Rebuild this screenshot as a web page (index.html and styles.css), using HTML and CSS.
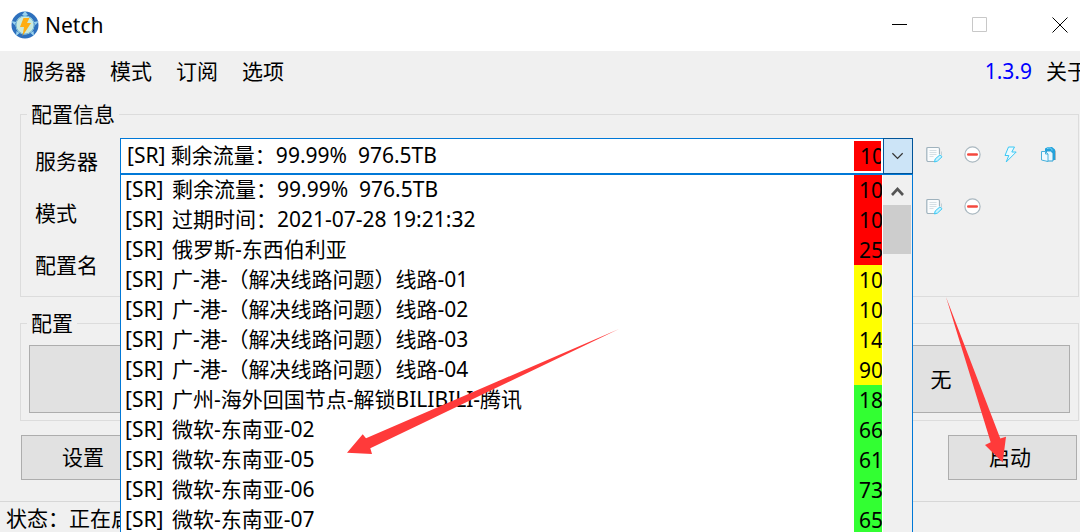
FILE: index.html
```html
<!DOCTYPE html>
<html lang="zh-CN">
<head>
<meta charset="utf-8">
<title>Netch</title>
<link rel="stylesheet" href="styles.css">
</head>
<body>
<svg class="sprites" aria-hidden="true">
  <symbol id="edit" viewBox="0 0 17 17">
    <path d="M13 1.500V10L8.500 15.500H2.300A1.500 1.500 0 0 1 .8 14V2.500a1 1 0 0 1 1-1z" fill="#fafcfd"/>
    <path d="M13.500 8V3a1.500 1.500 0 0 0-1.500-1.500H1.800a1 1 0 0 0-1 1V14a1.500 1.500 0 0 0 1.500 1.500H8" fill="none" stroke="#9fb2bd" stroke-width="1.200"/>
    <path d="M15.500 5.500v4" stroke="#c4d0d6" fill="none"/>
    <path d="M3.500 4.500h7M3.500 6.500h7M3.500 8.500h7M3.500 10.500h4" stroke="#d5dfe4"/>
    <path d="M8.500 16l.7-3L14 8.800l2 2L11.500 15z" fill="#c9f3ff" stroke="#35c8f5"/>
  </symbol>
  <symbol id="remove" viewBox="0 0 17 17">
    <circle cx="8.500" cy="8.500" r="7.600" fill="#fff" stroke="#aab8c0" stroke-width="1.200"/>
    <path d="M4.200 8.500h8.600" stroke="#f4493f" stroke-width="2.400" stroke-linecap="round"/>
  </symbol>
  <symbol id="bolt" viewBox="0 0 17 17">
    <path d="M6.500 1h6L9.800 6h4.400L4.200 16l2.600-6.500H3z" fill="#eafaff" stroke="#3bc8f5" stroke-linejoin="round"/>
  </symbol>
  <symbol id="copy" viewBox="0 0 17 17">
    <path d="M5 5V2.500L8 1h4l3 2.500V14h-4z" fill="#22a3dd"/>
    <path d="M7 2.500c3-1.500 5 0 5 2" fill="none" stroke="#8fdcf8"/>
    <path d="M15.500 4.500V14" stroke="#aeb6ba"/>
    <path d="M6.500 5h4l2.500 2v8H6.500z" fill="#eaf8fe" stroke="#2c9fd2"/>
    <path d="M1.500 5.500h4L8 8v7.500L1.500 14z" fill="#f0faff" stroke="#48b1dc"/>
    <path d="M5.500 5.500V8H8" fill="none" stroke="#48b1dc"/>
  </symbol>
</svg>

<header class="titlebar">
  <svg class="logo" viewBox="0 0 28 28" aria-hidden="true">
    <circle cx="14" cy="14" r="11.500" fill="#c9eadf" stroke="#2d70bd" stroke-width="4"/>
    <path d="M14 0l3 4-3 1-3-1zM28 10l-3.500 4-1.800-3zM0 10l3.500 4 1.800-3zM5 25l.5-5 3 2zM23 25l-.5-5-3 2z" fill="#9bd3ee"/>
    <circle cx="14" cy="14" r="9" fill="#c9eadf" stroke="#72b6d8" stroke-width="1"/>
    <path d="M12.500 7h6l-2.500 5h4l-8.500 13 1.500-9H9z" fill="#ffad12"/>
  </svg>
  <h1 class="title">Netch</h1>
  <div class="window-buttons">
    <button class="window-button" aria-label="最小化"><svg viewBox="0 0 16 16"><path d="M0 7.500h15" stroke="#000"/></svg></button>
    <button class="window-button" aria-label="最大化" disabled><svg viewBox="0 0 16 16"><path d="M.5.500h14v14H.5z" fill="none" stroke="#c8c8c8"/></svg></button>
    <button class="window-button" aria-label="关闭"><svg viewBox="0 0 16 16"><path d="M.5.500l15 15M15.500.500l-15 15" stroke="#000"/></svg></button>
  </div>
</header>

<nav class="menu">
  <button class="menu-item">服务器</button>
  <button class="menu-item">模式</button>
  <button class="menu-item">订阅</button>
  <button class="menu-item">选项</button>
  <a class="version" href="#version">1.3.9</a>
  <button class="menu-item about">关于</button>
</nav>

<main class="content">
  <fieldset class="group">
    <legend>配置信息</legend>
    <div class="form">
      <label for="server">服务器</label>
      <div class="combo">
        <select id="server" class="field">
          <option>[SR] 剩余流量：99.99% &nbsp;976.5TB</option>
        </select>
        <span class="combo-delay">10</span>
        <svg class="combo-arrow" viewBox="0 0 30 36" aria-hidden="true"><path d="M9 15l5.500 5.500L20 15" fill="none" stroke="#333" stroke-width="1.300"/></svg>
        <div class="dropdown">
          <ul class="options" role="listbox" aria-label="服务器">
            <li role="option"><span class="kind">[SR] </span><span class="name">剩余流量：99.99% &nbsp;976.5TB</span><span class="delay slow">10</span></li>
            <li role="option"><span class="kind">[SR] </span><span class="name">过期时间：2021-07-28 19:21:32</span><span class="delay slow">10</span></li>
            <li role="option"><span class="kind">[SR] </span><span class="name">俄罗斯-东西伯利亚</span><span class="delay slow">25</span></li>
            <li role="option"><span class="kind">[SR] </span><span class="name">广-港-（解决线路问题）线路-01</span><span class="delay medium">10</span></li>
            <li role="option"><span class="kind">[SR] </span><span class="name">广-港-（解决线路问题）线路-02</span><span class="delay medium">10</span></li>
            <li role="option"><span class="kind">[SR] </span><span class="name">广-港-（解决线路问题）线路-03</span><span class="delay medium">14</span></li>
            <li role="option"><span class="kind">[SR] </span><span class="name">广-港-（解决线路问题）线路-04</span><span class="delay medium">90</span></li>
            <li role="option"><span class="kind">[SR] </span><span class="name">广州-海外回国节点-解锁BILIBILI-腾讯</span><span class="delay fast">18</span></li>
            <li role="option"><span class="kind">[SR] </span><span class="name">微软-东南亚-02</span><span class="delay fast">66</span></li>
            <li role="option"><span class="kind">[SR] </span><span class="name">微软-东南亚-05</span><span class="delay fast">61</span></li>
            <li role="option"><span class="kind">[SR] </span><span class="name">微软-东南亚-06</span><span class="delay fast">73</span></li>
            <li role="option"><span class="kind">[SR] </span><span class="name">微软-东南亚-07</span><span class="delay fast">65</span></li>
          </ul>
          <div class="scrollbar">
            <svg class="scroll-up" viewBox="0 0 28 30" aria-hidden="true"><path d="M9 20l5.500-6 5.500 6" fill="none" stroke="#555" stroke-width="2.600"/></svg>
            <div class="scroll-thumb"></div>
          </div>
        </div>
      </div>
      <div class="actions">
        <button class="icon-button" aria-label="编辑服务器"><svg><use href="#edit"/></svg></button>
        <button class="icon-button" aria-label="删除服务器"><svg><use href="#remove"/></svg></button>
        <button class="icon-button" aria-label="测速"><svg><use href="#bolt"/></svg></button>
        <button class="icon-button" aria-label="复制链接"><svg><use href="#copy"/></svg></button>
      </div>

      <label for="mode">模式</label>
      <select id="mode" class="field"></select>
      <div class="actions">
        <button class="icon-button" aria-label="编辑模式"><svg><use href="#edit"/></svg></button>
        <button class="icon-button" aria-label="删除模式"><svg><use href="#remove"/></svg></button>
      </div>

      <label for="profile">配置名</label>
      <input id="profile" class="field" type="text">
    </div>
  </fieldset>

  <fieldset class="group profiles">
    <legend>配置</legend>
    <div class="profile-list">
      <button class="button" aria-label="配置 1"></button>
      <button class="button" aria-label="配置 2"></button>
      <button class="button" aria-label="配置 3"></button>
      <button class="button">无</button>
    </div>
  </fieldset>

  <div class="commands">
    <button class="button command">设置</button>
    <button class="button command">启动</button>
  </div>
</main>

<footer class="status">状态：正在启动</footer>

<svg class="arrows" width="1080" height="532" viewBox="0 0 1080 532" aria-hidden="true">
  <path d="M619 329L366 438.300L362.700 434.300L347 452.700L372 454L370.300 448.300z"/>
  <path d="M946 297L990.700 442.300L985 445L1002.700 462.500L1006 436.700L1000.300 438.500z"/>
</svg>
</body>
</html>
```
FILE: styles.css
```css
* {
  box-sizing: border-box;
}

body {
  position: relative;
  margin: 0;
  height: 100vh;
  overflow: hidden;
  background: #f0f0f0;
  color: #000;
  font: 21px/28px "Noto Sans", "Noto Sans CJK SC", sans-serif;
  white-space: nowrap;
}

button,
select,
input {
  font: inherit;
  color: inherit;
}

button {
  padding: 0;
  border: 0;
  background: none;
}

svg {
  display: block;
}

.sprites {
  display: none;
}

/* Title bar */
.titlebar {
  display: flex;
  align-items: center;
  gap: 6px;
  height: 51px;
  padding: 0 0 1px 11px;
  background: #fff;
}

.logo {
  width: 28px;
  height: 28px;
}

.title {
  margin: 0;
  font-size: 21px;
  font-weight: 400;
}

.window-buttons {
  display: flex;
  gap: 39px;
  margin-left: auto;
}

.window-button {
  display: grid;
  place-items: center;
  width: 41px;
  height: 50px;
}

.window-button svg {
  width: 16px;
  height: 16px;
}

/* Menu */
.menu {
  display: flex;
  align-items: center;
  gap: 24px;
  height: 42px;
  padding: 0 0 2px 23px;
}

.version {
  margin-left: auto;
  color: #00f;
  text-decoration: none;
}

.about {
  margin: 0 -8px 0 -10px;
}

/* Groups */
.content {
  padding: 7px 1px 0 20px;
}

.group {
  min-width: 0;
  margin: 0;
  padding: 7px 9px 5px 14px;
  border: 1px solid #dcdcdc;
}

.group legend {
  margin-left: -8px;
  padding: 0 4px;
}

.form {
  display: grid;
  grid-template-columns: 85px 1fr 156px;
  grid-auto-rows: 52px;
}

.form label {
  align-self: center;
}

.field {
  width: 100%;
  height: 36px;
  margin: 0;
  padding: 0 6px;
  border: 1px solid #7a7a7a;
  border-radius: 0;
  background: #fff;
  appearance: none;
}

.combo {
  position: relative;
  z-index: 1;
  align-self: start;
  display: flex;
  height: 36px;
  margin-top: 3px;
  border: 1px solid #0078d7;
  background: #fff;
}

.combo .field {
  flex: 1;
  height: 34px;
  padding: 0 6px 2px;
  border: 0;
  outline: 0;
}

.combo-delay {
  width: 27px;
  margin: 2px 3px;
  padding-left: 6px;
  overflow: hidden;
  background: #f00;
  line-height: 30px;
}

.combo-arrow {
  width: 30px;
  height: 36px;
  margin: -1px;
  border: 1px solid #005499;
  background: #cce4f7;
}

.dropdown {
  position: absolute;
  top: 35px;
  left: -1px;
  right: -1px;
  display: flex;
  border: 1px solid #0078d7;
  background: #fff;
}

.options {
  flex: 1;
  margin: 0;
  padding: 0 1px 0 4px;
  list-style: none;
}

.options li {
  display: flex;
  height: 30px;
}

.kind {
  width: 47px;
}

.name {
  flex: 1;
}

.delay {
  width: 28px;
  padding-left: 5px;
  overflow: hidden;
  line-height: 30px;
}

.slow {
  background: #f00;
}

.medium {
  background: #ff0;
}

.fast {
  background: #32ff32;
}

.scrollbar {
  width: 29px;
  background: #f0f0f0;
}

.scroll-up {
  width: 28px;
  height: 30px;
}

.scroll-thumb {
  height: 49px;
  margin-right: 1px;
  background: #cdcdcd;
}

.actions {
  display: flex;
  align-items: flex-start;
  gap: 21px;
  padding: 11px 0 0 13px;
}

.icon-button {
  width: 17px;
  height: 17px;
}

.icon-button svg {
  width: 17px;
  height: 17px;
}

.form > #mode,
.form > #profile {
  align-self: center;
}

/* Profile buttons */
.profiles {
  margin-top: 12px;
  padding: 8px 8px 7px;
}

.profiles legend {
  margin-left: -2px;
}

.profile-list {
  display: flex;
  gap: 3px;
}

.button {
  border: 1px solid #adadad;
  background: #e1e1e1;
}

.profile-list .button {
  flex: 1;
  height: 68px;
}

.commands {
  display: flex;
  justify-content: space-between;
  padding: 14px 2px 0 1px;
}

.command {
  width: 129px;
  height: 45px;
  padding: 0 5px 2px 0;
}

.status {
  margin-top: 21px;
  padding: 2px 6px;
  border-top: 1px solid #d7d7d7;
}

/* Annotation arrows drawn over the window */
.arrows {
  position: absolute;
  z-index: 2;
  top: 0;
  left: 0;
  fill: #ff3a3a;
  pointer-events: none;
}
```
